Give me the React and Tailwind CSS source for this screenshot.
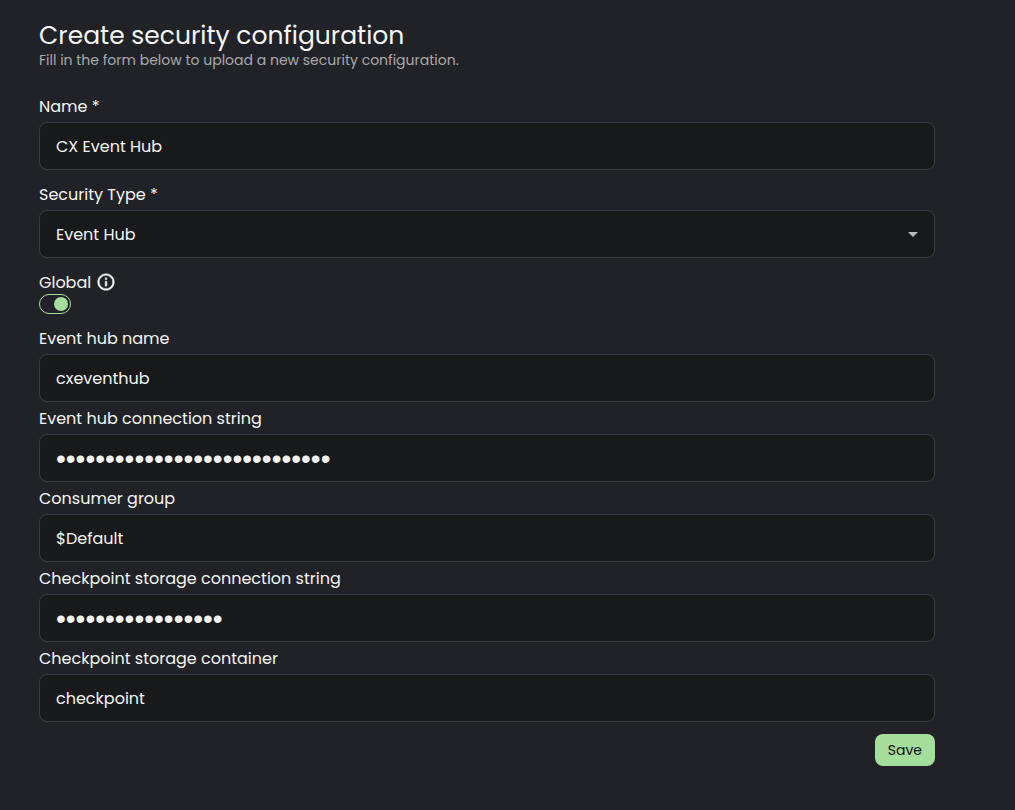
import { useState } from "react";

const fieldBox =
  "h-12 w-full rounded-lg border border-[#3a3c40] bg-[#18191a] px-4 pt-px text-[#f5f5f5] outline-none focus:border-[#a5dd9b]";

const labelText = "pt-0.5 leading-[22px]";

function Field({ id, label, type = "text", defaultValue }) {
  const face =
    type === "password" ? "font-['Liberation_Sans',sans-serif] text-[28px]" : "text-base";
  return (
    <div className="flex flex-col gap-1">
      <label htmlFor={id} className={labelText}>
        {label}
      </label>
      <input
        id={id}
        type={type}
        defaultValue={defaultValue}
        autoComplete="off"
        className={`${fieldBox} ${face}`}
      />
    </div>
  );
}

function InfoIcon() {
  return (
    <svg viewBox="0 0 24 24" className="size-5" fill="currentColor" stroke="currentColor" strokeWidth="0.5" aria-hidden="true">
      <path d="M11 7h2v2h-2zm0 4h2v6h-2zm1-9C6.48 2 2 6.48 2 12s4.480 10 10 10 10-4.480 10-10S17.520 2 12 2m0 18c-4.410 0-8-3.590-8-8s3.590-8 8-8 8 3.590 8 8-3.590 8-8 8" />
    </svg>
  );
}

export default function App() {
  const [isGlobal, setIsGlobal] = useState(true);

  return (
    <main className="min-h-screen bg-[#212227] pt-[22px] pr-20 pb-11 pl-[39px] font-['Poppins','Inter',sans-serif] text-base text-[#f5f5f5]">
      <header>
        <h1 className="text-[25px] leading-7">Create security configuration</h1>
        <p className="text-sm leading-5 text-[#a9a9aa]">
          Fill in the form below to upload a new security configuration.
        </p>
      </header>

      <form className="mt-6" onSubmit={(e) => e.preventDefault()}>
        <div className="flex flex-col gap-3">
          <Field id="name" label="Name *" defaultValue="CX Event Hub" />

          <div className="flex flex-col gap-1">
            <label htmlFor="type" className={labelText}>
              Security Type *
            </label>
            <div className="relative">
              <select id="type" defaultValue="Event Hub" className={`${fieldBox} appearance-none`}>
                <option>Event Hub</option>
              </select>
              <svg
                viewBox="0 0 10 5"
                className="pointer-events-none absolute top-[22px] right-[17px] h-[5px] w-[10px]"
                fill="#babbbb"
                aria-hidden="true"
              >
                <path d="M0 0h10L5 5z" />
              </svg>
            </div>
          </div>

          <div>
            <div className="flex items-center gap-[5px]">
              <label htmlFor="global" className={labelText}>
                Global
              </label>
              <InfoIcon />
            </div>
            <label className="flex h-5 w-8 items-center rounded-full border border-[#a5dd9b] px-0.5 has-checked:justify-end">
              <input
                id="global"
                type="checkbox"
                role="switch"
                checked={isGlobal}
                onChange={(e) => setIsGlobal(e.target.checked)}
                className="size-[14px] appearance-none rounded-full bg-[#a5dd9b]"
              />
            </label>
          </div>
        </div>

        <div className="mt-3 flex flex-col gap-1">
          <Field id="hub-name" label="Event hub name" defaultValue="cxeventhub" />
          <Field
            id="hub-connection"
            label="Event hub connection string"
            type="password"
            defaultValue="0000000000000000000000000000"
          />
          <Field id="consumer-group" label="Consumer group" defaultValue="$Default" />
          <Field
            id="storage-connection"
            label="Checkpoint storage connection string"
            type="password"
            defaultValue="00000000000000000"
          />
          <Field
            id="storage-container"
            label="Checkpoint storage container"
            defaultValue="checkpoint"
          />
        </div>

        <div className="mt-3 flex justify-end">
          <button
            type="submit"
            className="h-8 rounded-lg bg-[#a5dd9b] px-[13px] text-sm text-[#0c0e0c]"
          >
            Save
          </button>
        </div>
      </form>
    </main>
  );
}
